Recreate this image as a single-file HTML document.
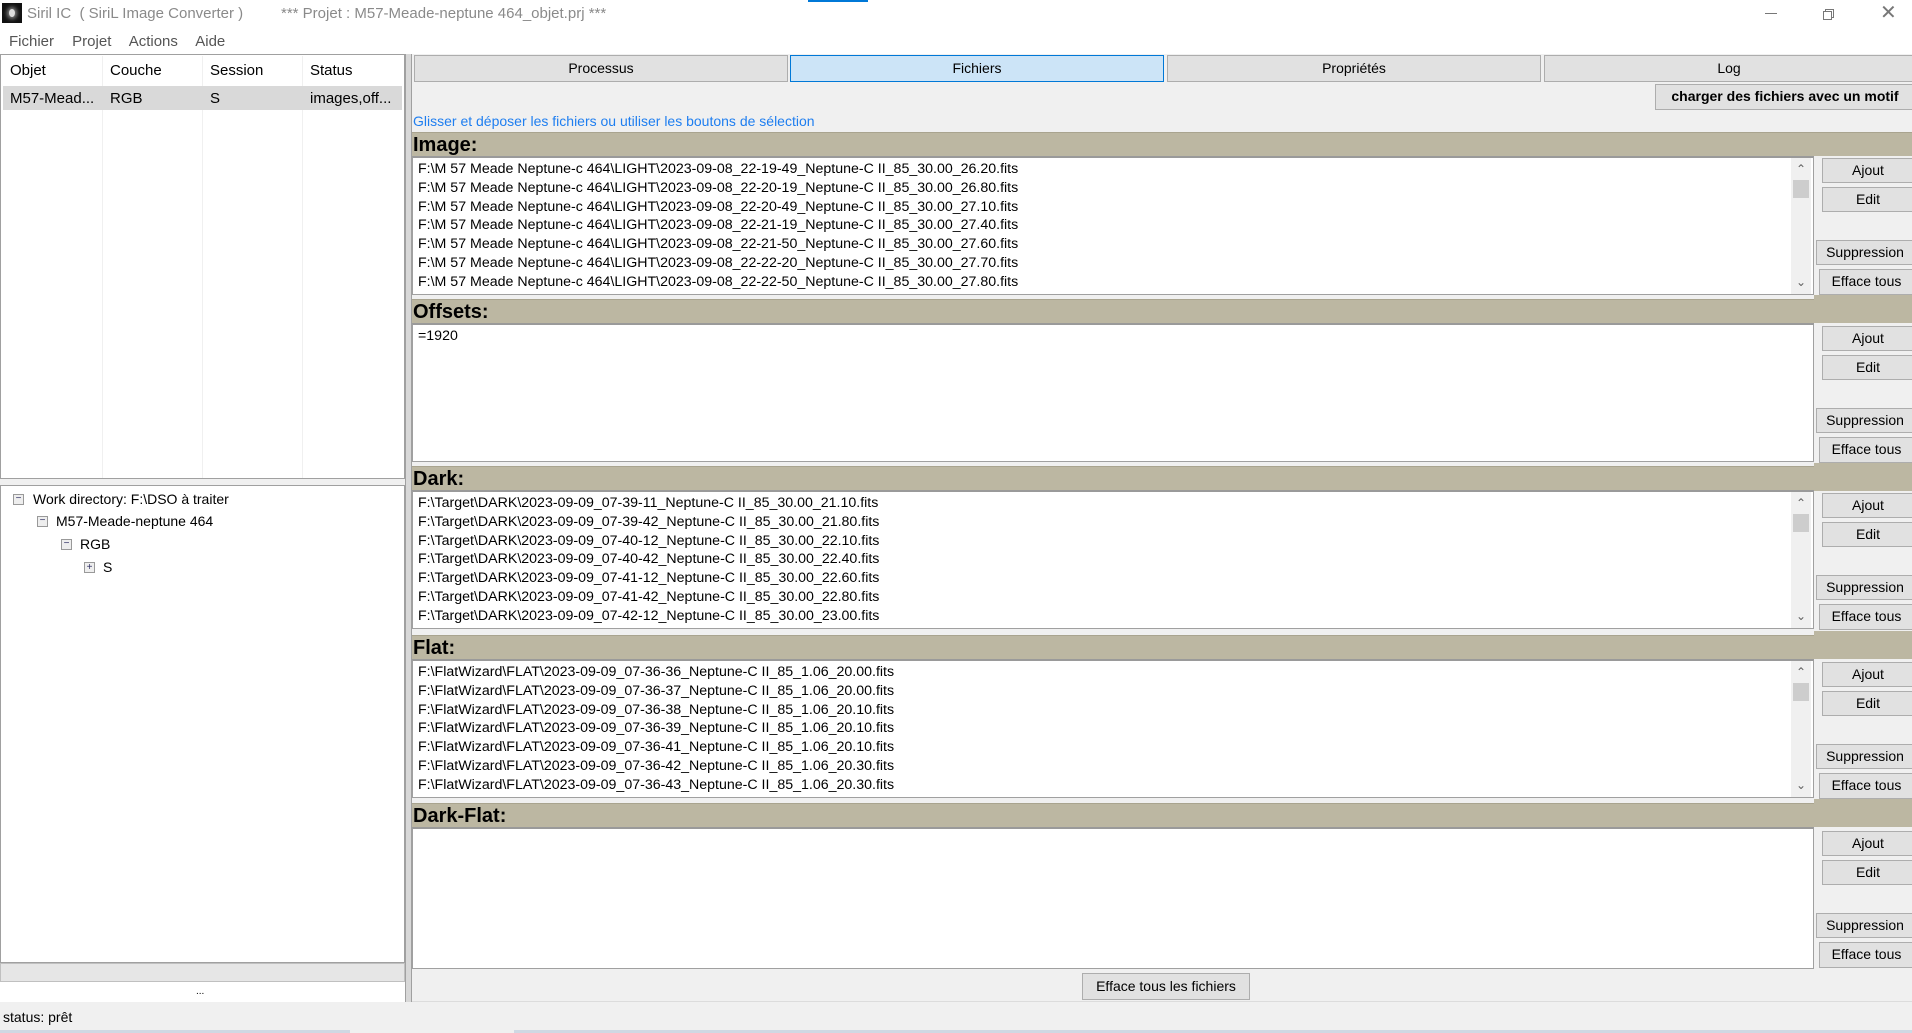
<!DOCTYPE html>
<html><head><meta charset="utf-8">
<style>
*{box-sizing:border-box;margin:0;padding:0}
body{width:1912px;height:1033px;background:#f0f0f0;font-family:"Liberation Sans",sans-serif;font-size:14px;color:#000;position:relative;overflow:hidden}
.a{position:absolute}
.btn{position:absolute;background:#e1e1e1;border:1px solid #adadad;text-align:center;font-size:14px;line-height:23px}
.hdr{position:absolute;left:412px;width:1500px;height:24px;background:#bcb7a2;font-weight:bold;font-size:20px;line-height:24px;padding-left:1px;border-top:1px solid #a9a48f}
.box{position:absolute;left:412px;width:1402px;height:139px;background:#fff;border:1px solid #a0a0a0;border-top:2px solid #9a9a9a;font-size:14.2px;line-height:18.8px;padding:2px 0 0 5px;white-space:nowrap;overflow:hidden}
.sb{position:absolute;right:2px;top:0;width:20px;height:100%;background:#f0f0f0}
.sb .th{position:absolute;left:2px;top:22px;width:16px;height:18px;background:#cdcdcd}
.sb .u,.sb .d{position:absolute;left:0;width:20px;text-align:center;font-size:12px;color:#606060}
.tab{position:absolute;top:55px;height:27px;background:#e1e1e1;border:1px solid #adadad;text-align:center;line-height:25px;font-size:14px}
</style></head><body>
<div class="a" style="left:0;top:0;width:1912px;height:27px;background:#fff"></div>
<div class="a" style="left:2px;top:3px;width:20px;height:20px;background:#111"><div style="position:absolute;left:7px;top:6px;width:6px;height:8px;border-radius:50%;background:#ddd;box-shadow:0 0 4px 2px #888"></div></div>
<div class="a" style="left:27px;top:5px;color:#8a8a8a;font-size:15px">Siril IC &nbsp;( SiriL Image Converter )</div>
<div class="a" style="left:281px;top:5px;color:#8a8a8a;font-size:15px">*** Projet : M57-Meade-neptune 464_objet.prj ***</div>
<div class="a" style="left:808px;top:0;width:60px;height:2px;background:#0078d7"></div>
<div class="a" style="left:1765px;top:13px;width:12px;height:1px;background:#777"></div>
<div class="a" style="left:1825px;top:9px;width:9px;height:9px;border:1px solid #777;background:#fff"></div>
<div class="a" style="left:1823px;top:11px;width:9px;height:9px;border:1px solid #777;background:#fff"></div>
<div class="a" style="left:1880px;top:3px;font-size:20px;color:#777;line-height:20px">✕</div>
<div class="a" style="left:0;top:27px;width:1912px;height:27px;background:#fff"></div>
<div class="a" style="left:9px;top:33px;color:#555;font-size:15px;word-spacing:14px">Fichier Projet Actions Aide</div>
<div class="a" style="left:0;top:54px;width:405px;height:425px;background:#fff;border:1px solid #a0a0a0"></div>
<div class="a" style="left:102px;top:56px;width:1px;height:422px;background:#f0f0f0"></div>
<div class="a" style="left:202px;top:56px;width:1px;height:422px;background:#f0f0f0"></div>
<div class="a" style="left:302px;top:56px;width:1px;height:422px;background:#f0f0f0"></div>
<div class="a" style="left:3px;top:86px;width:399px;height:24px;background:#d9d9d9"></div>
<div class="a" style="left:10px;top:62px;font-size:15px">Objet</div>
<div class="a" style="left:110px;top:62px;font-size:15px">Couche</div>
<div class="a" style="left:210px;top:62px;font-size:15px">Session</div>
<div class="a" style="left:310px;top:62px;font-size:15px">Status</div>
<div class="a" style="left:10px;top:90px;font-size:15px">M57-Mead...</div>
<div class="a" style="left:110px;top:90px;font-size:15px">RGB</div>
<div class="a" style="left:210px;top:90px;font-size:15px">S</div>
<div class="a" style="left:310px;top:90px;font-size:15px">images,off...</div>
<div class="a" style="left:405px;top:54px;width:7px;height:948px;background:#d8d8d8;border-left:1px solid #a0a0a0;border-right:1px solid #a0a0a0"></div>
<div class="a" style="left:0;top:485px;width:405px;height:478px;background:#fff;border:1px solid #a0a0a0"></div>
<div class="a" style="left:0;top:963px;width:405px;height:19px;background:#e6e6e6;border:1px solid #c0c0c0"></div>
<div class="a" style="left:0;top:982px;width:405px;height:20px;background:#fff"></div>
<div class="a" style="left:196px;top:986px;font-size:10px">...</div>
<div class="a" style="left:13px;top:494px;width:11px;height:11px;border:1px solid #999;background:#eee;font-size:10px;line-height:8px;text-align:center;color:#336">−</div>
<div class="a" style="left:33px;top:491px;font-size:14px">Work directory: F:\DSO à traiter</div>
<div class="a" style="left:37px;top:516px;width:11px;height:11px;border:1px solid #999;background:#eee;font-size:10px;line-height:8px;text-align:center;color:#336">−</div>
<div class="a" style="left:56px;top:513px;font-size:14px">M57-Meade-neptune 464</div>
<div class="a" style="left:61px;top:539px;width:11px;height:11px;border:1px solid #999;background:#eee;font-size:10px;line-height:8px;text-align:center;color:#336">−</div>
<div class="a" style="left:80px;top:536px;font-size:14px">RGB</div>
<div class="a" style="left:84px;top:562px;width:11px;height:11px;border:1px solid #999;background:#eee;font-size:10px;line-height:9px;text-align:center;color:#336">+</div>
<div class="a" style="left:103px;top:559px;font-size:14px">S</div>
<div class="tab" style="left:414px;width:374px">Processus</div>
<div class="tab" style="left:790px;width:374px;background:#cce4f7;border-color:#0078d7">Fichiers</div>
<div class="tab" style="left:1167px;width:374px">Propriétés</div>
<div class="tab" style="left:1544px;width:370px">Log</div>
<div class="btn" style="left:1655px;top:84px;width:260px;height:26px;font-weight:bold;font-size:14px">charger des fichiers avec un motif</div>
<div class="a" style="left:413px;top:113px;color:#1e7ef0;font-size:14px">Glisser et déposer les fichiers ou utiliser les boutons de sélection</div>

<div class="hdr" style="top:132px">Image:</div>
<div class="box" style="top:156px">F:\M 57 Meade Neptune-c 464\LIGHT\2023-09-08_22-19-49_Neptune-C II_85_30.00_26.20.fits<br>F:\M 57 Meade Neptune-c 464\LIGHT\2023-09-08_22-20-19_Neptune-C II_85_30.00_26.80.fits<br>F:\M 57 Meade Neptune-c 464\LIGHT\2023-09-08_22-20-49_Neptune-C II_85_30.00_27.10.fits<br>F:\M 57 Meade Neptune-c 464\LIGHT\2023-09-08_22-21-19_Neptune-C II_85_30.00_27.40.fits<br>F:\M 57 Meade Neptune-c 464\LIGHT\2023-09-08_22-21-50_Neptune-C II_85_30.00_27.60.fits<br>F:\M 57 Meade Neptune-c 464\LIGHT\2023-09-08_22-22-20_Neptune-C II_85_30.00_27.70.fits<br>F:\M 57 Meade Neptune-c 464\LIGHT\2023-09-08_22-22-50_Neptune-C II_85_30.00_27.80.fits
<div class="sb"><div class="u" style="top:2px">⌃</div><div class="th"></div><div class="d" style="bottom:2px">⌄</div></div></div>
<div class="hdr" style="top:299px">Offsets:</div>
<div class="box" style="top:323px">=1920</div>
<div class="hdr" style="top:466px">Dark:</div>
<div class="box" style="top:490px">F:\Target\DARK\2023-09-09_07-39-11_Neptune-C II_85_30.00_21.10.fits<br>F:\Target\DARK\2023-09-09_07-39-42_Neptune-C II_85_30.00_21.80.fits<br>F:\Target\DARK\2023-09-09_07-40-12_Neptune-C II_85_30.00_22.10.fits<br>F:\Target\DARK\2023-09-09_07-40-42_Neptune-C II_85_30.00_22.40.fits<br>F:\Target\DARK\2023-09-09_07-41-12_Neptune-C II_85_30.00_22.60.fits<br>F:\Target\DARK\2023-09-09_07-41-42_Neptune-C II_85_30.00_22.80.fits<br>F:\Target\DARK\2023-09-09_07-42-12_Neptune-C II_85_30.00_23.00.fits
<div class="sb"><div class="u" style="top:2px">⌃</div><div class="th"></div><div class="d" style="bottom:2px">⌄</div></div></div>
<div class="hdr" style="top:635px">Flat:</div>
<div class="box" style="top:659px">F:\FlatWizard\FLAT\2023-09-09_07-36-36_Neptune-C II_85_1.06_20.00.fits<br>F:\FlatWizard\FLAT\2023-09-09_07-36-37_Neptune-C II_85_1.06_20.00.fits<br>F:\FlatWizard\FLAT\2023-09-09_07-36-38_Neptune-C II_85_1.06_20.10.fits<br>F:\FlatWizard\FLAT\2023-09-09_07-36-39_Neptune-C II_85_1.06_20.10.fits<br>F:\FlatWizard\FLAT\2023-09-09_07-36-41_Neptune-C II_85_1.06_20.10.fits<br>F:\FlatWizard\FLAT\2023-09-09_07-36-42_Neptune-C II_85_1.06_20.30.fits<br>F:\FlatWizard\FLAT\2023-09-09_07-36-43_Neptune-C II_85_1.06_20.30.fits
<div class="sb"><div class="u" style="top:2px">⌃</div><div class="th"></div><div class="d" style="bottom:2px">⌄</div></div></div>
<div class="hdr" style="top:803px">Dark-Flat:</div>
<div class="box" style="top:827px;height:142px"></div>

<div class="a" style="left:1814px;top:156px;width:98px;height:813px;background:#f0f0f0"></div>
<div class="a" style="left:1814px;top:295px;width:98px;height:28px;background:#bcb7a2"></div>
<div class="a" style="left:1814px;top:463px;width:98px;height:28px;background:#bcb7a2"></div>
<div class="a" style="left:1814px;top:631px;width:98px;height:28px;background:#bcb7a2"></div>
<div class="a" style="left:1814px;top:799px;width:98px;height:28px;background:#bcb7a2"></div>

<div class="btn" style="left:1822px;top:158px;width:92px;height:25px">Ajout</div>
<div class="btn" style="left:1822px;top:187px;width:92px;height:25px">Edit</div>
<div class="btn" style="left:1816px;top:240px;width:98px;height:25px">Suppression</div>
<div class="btn" style="left:1819px;top:269px;width:95px;height:26px">Efface tous</div>

<div class="btn" style="left:1822px;top:326px;width:92px;height:25px">Ajout</div>
<div class="btn" style="left:1822px;top:355px;width:92px;height:25px">Edit</div>
<div class="btn" style="left:1816px;top:408px;width:98px;height:25px">Suppression</div>
<div class="btn" style="left:1819px;top:437px;width:95px;height:26px">Efface tous</div>

<div class="btn" style="left:1822px;top:493px;width:92px;height:25px">Ajout</div>
<div class="btn" style="left:1822px;top:522px;width:92px;height:25px">Edit</div>
<div class="btn" style="left:1816px;top:575px;width:98px;height:25px">Suppression</div>
<div class="btn" style="left:1819px;top:604px;width:95px;height:26px">Efface tous</div>

<div class="btn" style="left:1822px;top:662px;width:92px;height:25px">Ajout</div>
<div class="btn" style="left:1822px;top:691px;width:92px;height:25px">Edit</div>
<div class="btn" style="left:1816px;top:744px;width:98px;height:25px">Suppression</div>
<div class="btn" style="left:1819px;top:773px;width:95px;height:26px">Efface tous</div>

<div class="btn" style="left:1822px;top:831px;width:92px;height:25px">Ajout</div>
<div class="btn" style="left:1822px;top:860px;width:92px;height:25px">Edit</div>
<div class="btn" style="left:1816px;top:913px;width:98px;height:25px">Suppression</div>
<div class="btn" style="left:1819px;top:942px;width:95px;height:26px">Efface tous</div>

<div class="btn" style="left:1082px;top:973px;width:168px;height:27px;line-height:25px">Efface tous les fichiers</div>
<div class="a" style="left:412px;top:1001px;width:1500px;height:1px;background:#dcdcdc"></div>
<div class="a" style="left:3px;top:1009px;font-size:14px">status: prêt</div>
<div class="a" style="left:0;top:1030px;width:350px;height:3px;background:#cfd8e3"></div>
<div class="a" style="left:514px;top:1030px;width:1398px;height:3px;background:#cfd8e3"></div>
</body></html>
